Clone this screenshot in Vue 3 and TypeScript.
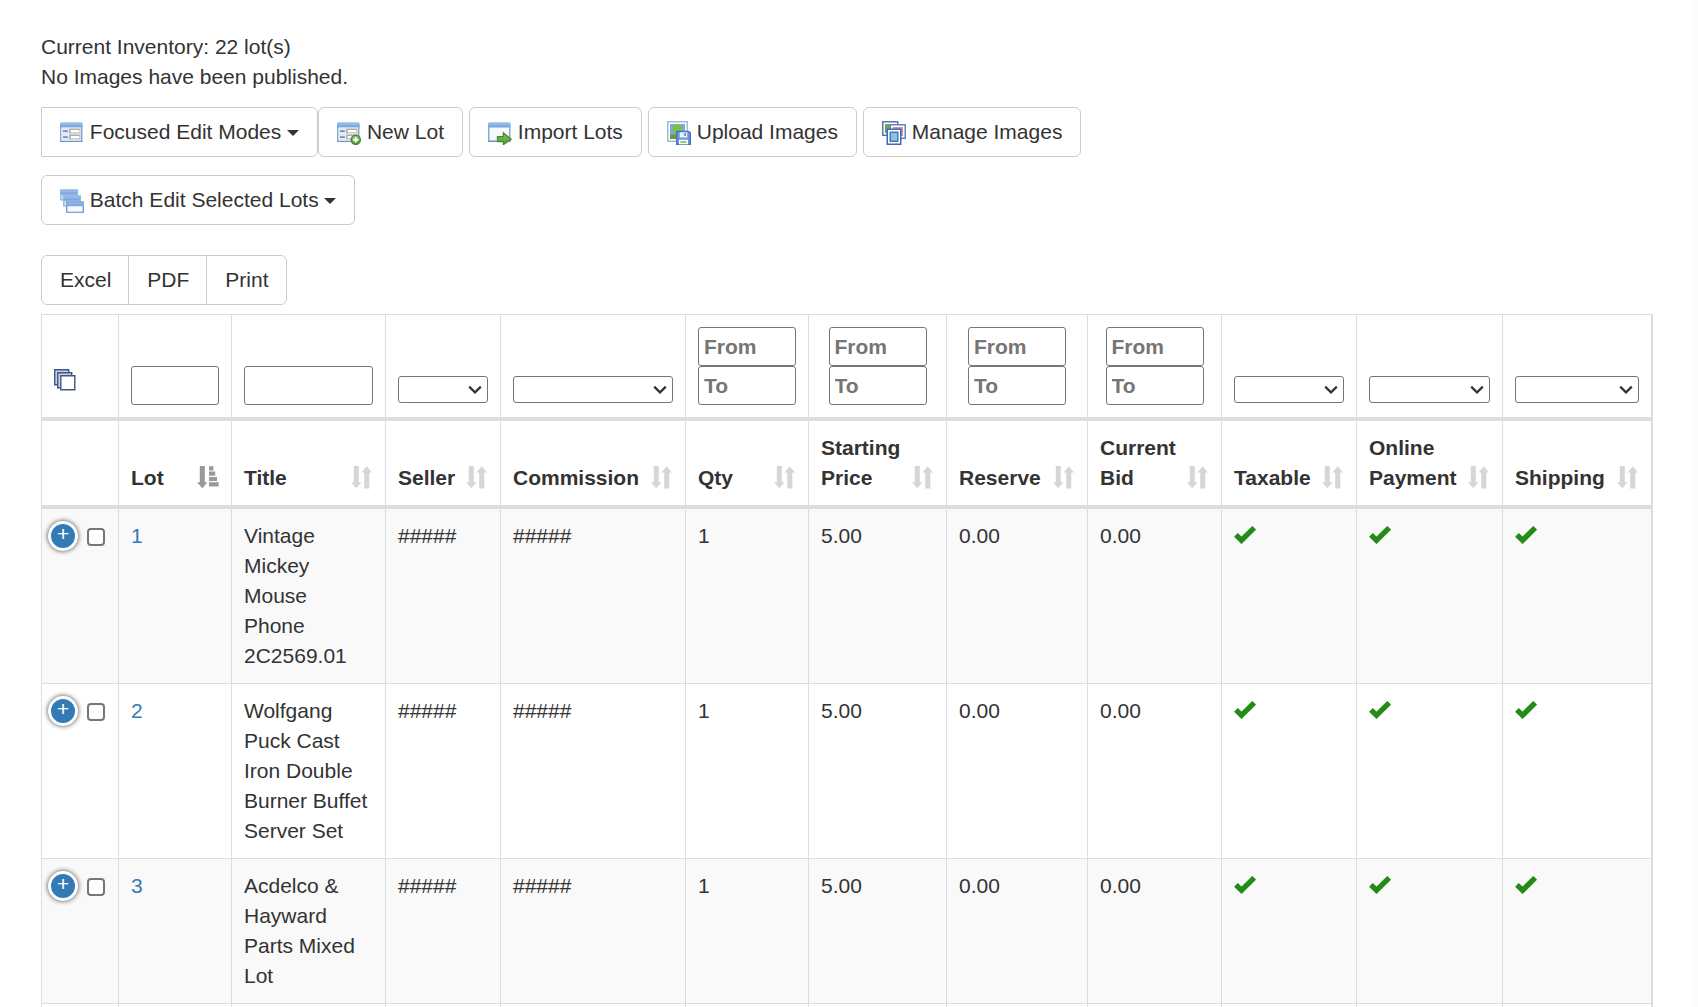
<script setup lang="ts">
import { ref } from 'vue'

type FilterKind = 'text' | 'select' | 'range'

interface Column {
  key: string
  label: string
  width: number
  filter: FilterKind
}

interface Lot {
  id: string
  title: string
  seller: string
  commission: string
  qty: string
  starting: string
  reserve: string
  current: string
}

const columns: Column[] = [
  { key: 'lot', label: 'Lot', width: 113, filter: 'text' },
  { key: 'title', label: 'Title', width: 154, filter: 'text' },
  { key: 'seller', label: 'Seller', width: 115, filter: 'select' },
  { key: 'commission', label: 'Commission', width: 185, filter: 'select' },
  { key: 'qty', label: 'Qty', width: 123, filter: 'range' },
  { key: 'starting', label: 'Starting Price', width: 138, filter: 'range' },
  { key: 'reserve', label: 'Reserve', width: 141, filter: 'range' },
  { key: 'current', label: 'Current Bid', width: 134, filter: 'range' },
  { key: 'taxable', label: 'Taxable', width: 135, filter: 'select' },
  { key: 'online', label: 'Online Payment', width: 146, filter: 'select' },
  { key: 'shipping', label: 'Shipping', width: 149, filter: 'select' },
]

const lots: Lot[] = [
  { id: '1', title: 'Vintage Mickey Mouse Phone 2C2569.01', seller: '#####', commission: '#####', qty: '1', starting: '5.00', reserve: '0.00', current: '0.00' },
  { id: '2', title: 'Wolfgang Puck Cast Iron Double Burner Buffet Server Set', seller: '#####', commission: '#####', qty: '1', starting: '5.00', reserve: '0.00', current: '0.00' },
  { id: '3', title: 'Acdelco & Hayward Parts Mixed Lot', seller: '#####', commission: '#####', qty: '1', starting: '5.00', reserve: '0.00', current: '0.00' },
]

const flags = ['Taxable', 'Online Payment', 'Shipping']
const selected = ref<string[]>([])

function toggleAll(): void {
  selected.value = selected.value.length === lots.length ? [] : lots.map((lot) => lot.id)
}
</script>

<template>
  <main class="page">
    <p class="summary">Current Inventory: 22 lot(s)<br />No Images have been published.</p>

    <svg class="defs" aria-hidden="true">
      <defs>
        <linearGradient id="bar" x1="0" y1="0" x2="0" y2="1">
          <stop offset="0" stop-color="#a3c4ec" />
          <stop offset="1" stop-color="#6f9fd8" />
        </linearGradient>
        <linearGradient id="leaf" x1="0" y1="0" x2="0" y2="1">
          <stop offset="0" stop-color="#8cc46a" />
          <stop offset="1" stop-color="#4c9a35" />
        </linearGradient>
        <g id="window">
          <rect x=".5" y="1.5" width="14" height="12" rx=".6" fill="#f6f8fb" stroke="#86a9d8" />
          <rect x="0" y="1" width="15" height="3.4" rx=".6" fill="url(#bar)" />
          <path d="M0 13.6h15" stroke="#6b92c8" stroke-width=".8" />
        </g>
        <g id="form">
          <use href="#window" />
          <rect x="1" y="4.4" width="13" height="8.8" fill="#e6e9ee" />
          <path d="M2 6.7h3.2M2 10.7h3.2" stroke="#6a8fd8" stroke-width="1.1" />
          <path d="M6.6 5.6h6.6v2.3H6.6zM6.6 9.6h6.6v2.3H6.6z" fill="#fff" stroke="#c6c6c6" stroke-width=".8" />
          <path d="M6.6 8.2V5.6h6.6M6.6 12.2V9.6h6.6" fill="none" stroke="#adadad" stroke-width=".9" />
        </g>
      </defs>
    </svg>

    <div class="toolbar">
      <button type="button" class="btn square-left">
        <svg class="icon" viewBox="0 0 16 16" aria-hidden="true"><use href="#form" /></svg>
        Focused Edit Modes <span class="caret"></span>
      </button>
      <div class="actions">
        <button type="button" class="btn">
          <svg class="icon" viewBox="0 0 16 16" aria-hidden="true">
            <use href="#form" />
            <circle cx="12.5" cy="12.5" r="3.1" fill="url(#leaf)" stroke="#3f7f2a" stroke-width=".8" />
            <path d="M12.5 10.7v3.6M10.7 12.5h3.6" stroke="#fff" stroke-width="1.2" />
          </svg>
          New Lot
        </button>
        <button type="button" class="btn">
          <svg class="icon" viewBox="0 0 16 16" aria-hidden="true">
            <use href="#window" />
            <path d="M6.3 10.4h3.9V7.8l5.3 4.4-5.3 3.6v-2.1H6.3z" fill="url(#leaf)" stroke="#46892f" stroke-width=".8" />
          </svg>
          Import Lots
        </button>
        <button type="button" class="btn">
          <svg class="icon" viewBox="0 0 16 16" aria-hidden="true">
            <rect x=".5" y=".5" width="13" height="13" fill="#fff" stroke="#a6b8d8" />
            <rect x="2" y="2" width="10" height="10" fill="#7fa9dc" />
            <circle cx="7" cy="5.5" r="3.4" fill="#79c043" />
            <path d="M2 9h10v3H2z" fill="#5aa13c" />
            <path d="M6.5 7h8l1 1v7.5h-9z" fill="#6a98e4" stroke="#4a74c0" />
            <path d="M8.5 7.5h5V11h-5z" fill="#e9f0fb" />
            <path d="M12 8v2" stroke="#5577aa" />
            <path d="M8 12.5h6v3H8z" fill="#fff" />
            <path d="M9 14h4" stroke="#7cc95a" stroke-width="1.2" />
          </svg>
          Upload Images
        </button>
        <button type="button" class="btn">
          <svg class="icon" viewBox="0 0 16 16" aria-hidden="true">
            <path d="M.5.5h10v9H.5z" fill="#fff" stroke="#5878ac" />
            <path d="M2 2h7v6H2z" fill="#68a861" />
            <path d="M5.5 2.5h10v9h-10z" fill="#fff" stroke="#5b87c8" />
            <path d="M7 4h7v6H7z" fill="#e08c90" />
            <path d="M3.5 5.5h9v10h-9z" fill="#fff" stroke="#416bab" />
            <path d="M5.5 7.5h5v6h-5z" fill="#8fc0e8" stroke="#477ab8" />
          </svg>
          Manage Images
        </button>
      </div>
    </div>

    <div class="toolbar batch">
      <button type="button" class="btn">
        <svg class="icon" viewBox="0 0 16 16" aria-hidden="true">
          <g stroke="#8fb5e4" stroke-width=".8">
            <path d="M.5.7h11v6.6H.5z" fill="#d6e5f7" />
            <path d="M.5.7h11v3H.5z" fill="url(#bar)" />
            <path d="M2.5 4.7h11v6.6h-11z" fill="#dce9f9" stroke="#84ace0" />
            <path d="M2.5 4.7h11v3h-11z" fill="url(#bar)" />
            <path d="M4.5 8.7h11v6.8h-11z" fill="#f7faff" stroke="#5c86c6" />
            <path d="M4.5 8.7h11v2.4h-11z" fill="url(#bar)" stroke="#84ace0" />
          </g>
        </svg>
        Batch Edit Selected Lots <span class="caret"></span>
      </button>
    </div>

    <div class="exports">
      <button type="button" class="btn">Excel</button>
      <button type="button" class="btn">PDF</button>
      <button type="button" class="btn">Print</button>
    </div>

    <table class="lots">
      <colgroup>
        <col style="width: 77px" />
        <col v-for="c in columns" :key="c.key" :style="{ width: c.width + 'px' }" />
      </colgroup>
      <thead>
        <tr>
          <th>
            <button type="button" class="select-all" aria-label="Select all lots" @click="toggleAll">
              <svg viewBox="0 0 24 24" aria-hidden="true">
                <g fill="#c9d1e0" stroke="#41558a" stroke-width="1.4">
                  <path d="M.7.7h14v15H.7z" />
                  <path d="M3.7 3.7h14v15h-14z" />
                  <path d="M6.8 6.8h14v14h-14z" fill="#fff" />
                </g>
              </svg>
            </button>
          </th>
          <th v-for="c in columns" :key="c.key">
            <input v-if="c.filter === 'text'" type="text" class="field" :aria-label="c.label" />
            <select v-else-if="c.filter === 'select'" class="pick" :aria-label="c.label">
              <option value=""></option>
            </select>
            <div v-else class="range">
              <input type="text" class="field" placeholder="From" :aria-label="c.label + ' from'" />
              <input type="text" class="field" placeholder="To" :aria-label="c.label + ' to'" />
            </div>
          </th>
        </tr>
        <tr>
          <th></th>
          <th v-for="c in columns" :key="c.key" scope="col">
            <div class="heading">
              <span>{{ c.label }}</span>
              <svg v-if="c.key === 'lot'" class="sort active" viewBox="0 0 22 24" aria-hidden="true">
                <path d="M2.8 0h5v16.3h2.7L5.3 22.3 0 16.3h2.8zM12 .3h4.4v4.2H12zM12 5.6h6.2v4.2H12zM12 10.9h8v4.2h-8zM12 16.2h9.6v4.4H12z" />
              </svg>
              <svg v-else class="sort" viewBox="0 0 22 24" aria-hidden="true">
                <path d="M2.8 0h5v16.3h2.7L5.3 22.3 0 16.3h2.8zM13.2 22.5V6.6h-2.7L15.7.3 21 6.6h-2.7v15.9z" />
              </svg>
            </div>
          </th>
        </tr>
      </thead>
      <tbody>
        <tr v-for="lot in lots" :key="lot.id">
          <td class="tools">
            <div class="controls">
              <button type="button" class="expand" :aria-label="'Show details of lot ' + lot.id">+</button>
              <input v-model="selected" type="checkbox" :value="lot.id" :aria-label="'Select lot ' + lot.id" />
            </div>
          </td>
          <td><a href="#">{{ lot.id }}</a></td>
          <td>{{ lot.title }}</td>
          <td>{{ lot.seller }}</td>
          <td>{{ lot.commission }}</td>
          <td>{{ lot.qty }}</td>
          <td>{{ lot.starting }}</td>
          <td>{{ lot.reserve }}</td>
          <td>{{ lot.current }}</td>
          <td v-for="flag in flags" :key="flag">
            <svg class="check" viewBox="31 0 1226 1012" role="img" :aria-label="flag">
              <path
                transform="translate(0 1056) scale(1 -1)"
                d="M465 477l571 571q8 8 18 8t17 -8l177 -177q8 -7 8 -17t-8 -18l-783 -784q-7 -8 -17.5 -8t-17.5 8l-384 384q-8 8 -8 18t8 17l177 177q7 8 17 8t18 -8l171 -171q7 -7 18 -7t18 7z"
              />
            </svg>
          </td>
        </tr>
        <tr>
          <td v-for="n in 12" :key="n">&nbsp;</td>
        </tr>
      </tbody>
    </table>
  </main>
</template>

<style>
body {
  margin: 0;
  background: #fff;
}
</style>

<style scoped>
.page,
.page * {
  box-sizing: border-box;
}

.page {
  height: 100vh;
  overflow: hidden;
  padding: 32px 40px 0 41px;
  border-right: 5px solid #fcfcfc;
  color: #333;
  font: 21px/30px "Liberation Sans", Arial, sans-serif;
}

.defs {
  position: absolute;
  width: 0;
  height: 0;
}

.summary {
  margin: 0 0 15px;
}

.toolbar,
.actions,
.exports {
  display: flex;
  flex-wrap: wrap;
}

.actions {
  gap: 6px;
}

.batch {
  margin-top: 18px;
}

.btn {
  padding: 9px 18px;
  border: 1px solid #ccc;
  border-radius: 6px;
  background: #fff;
  color: #333;
  font: inherit;
  white-space: nowrap;
  cursor: pointer;
}

.square-left {
  border-top-left-radius: 0;
  border-bottom-left-radius: 0;
}

.icon {
  width: 24px;
  height: 24px;
  vertical-align: middle;
}

.caret {
  display: inline-block;
  border: 6px solid transparent;
  border-top-color: #333;
  border-bottom: 0;
  vertical-align: middle;
}

.exports {
  margin: 30px 0 9px;
}

.exports .btn {
  padding-right: 17px;
  border-radius: 0;
}

.exports .btn + .btn {
  margin-left: -1px;
}

.exports .btn:first-child {
  border-radius: 6px 0 0 6px;
}

.exports .btn:last-child {
  border-radius: 0 6px 6px 0;
}

.lots {
  width: 100%;
  table-layout: fixed;
  border: 1px solid #ddd;
  border-bottom: 0;
  border-collapse: separate;
  border-spacing: 0;
}

th,
td {
  padding: 12px;
  border-right: 1px solid #ddd;
  border-bottom: 1px solid #ddd;
  text-align: left;
  vertical-align: top;
}

th {
  border-bottom-width: 4px;
  vertical-align: bottom;
}

tbody tr:nth-child(odd) {
  background: #f9f9f9;
}

.field {
  display: block;
  width: 100%;
  height: 39px;
  padding: 0 5px;
  border: 1px solid #767676;
  border-radius: 3px;
  background: #fff;
  color: #333;
  font: inherit;
}

.field::placeholder {
  color: #757575;
}

.range {
  max-width: 98px;
  margin: 0 auto;
}

.pick {
  display: block;
  width: 100%;
  height: 27px;
  margin-bottom: 2px;
  border: 1px solid #767676;
  border-radius: 3px;
  appearance: none;
  background: #fff url("data:image/svg+xml,%3Csvg xmlns='http://www.w3.org/2000/svg' width='14' height='10' viewBox='0 0 14 10'%3E%3Cpath d='M1.2 1.6 7 7.4l5.8-5.8' fill='none' stroke='%23333' stroke-width='2.2'/%3E%3C/svg%3E") no-repeat right 5px center;
  font: inherit;
}

.select-all {
  display: block;
  width: 24px;
  height: 24px;
  margin-bottom: 12px;
  padding: 0;
  border: 0;
  background: none;
  cursor: pointer;
}

.select-all svg {
  display: block;
}

.heading {
  display: flex;
  align-items: flex-end;
  justify-content: space-between;
}

.sort {
  flex: none;
  width: 22px;
  height: 24px;
  margin-bottom: 3px;
  fill: #d6d6d6;
}

.sort.active {
  fill: #999;
}

.tools {
  padding: 12px 6px;
}

.controls {
  display: flex;
  align-items: center;
  gap: 9px;
}

.expand {
  width: 30px;
  height: 30px;
  padding: 0 0 2px;
  border: 3px solid #fff;
  border-radius: 50%;
  background: #337ab7;
  box-shadow: 0 0 5px #444;
  color: #fff;
  font: 21px/21px "Liberation Mono", "Courier New", monospace;
  text-align: center;
  cursor: pointer;
}

.controls input {
  width: 18px;
  height: 18px;
  margin: 2px 0 0;
  appearance: none;
  border: 2px solid #767676;
  border-radius: 4px;
  background: #fff;
}

.controls input:checked {
  background: #337ab7;
}

a {
  color: #337ab7;
  text-decoration: none;
}

.check {
  display: block;
  width: 22px;
  height: 18px;
  margin-top: 5px;
  fill: #238c16;
}
</style>
